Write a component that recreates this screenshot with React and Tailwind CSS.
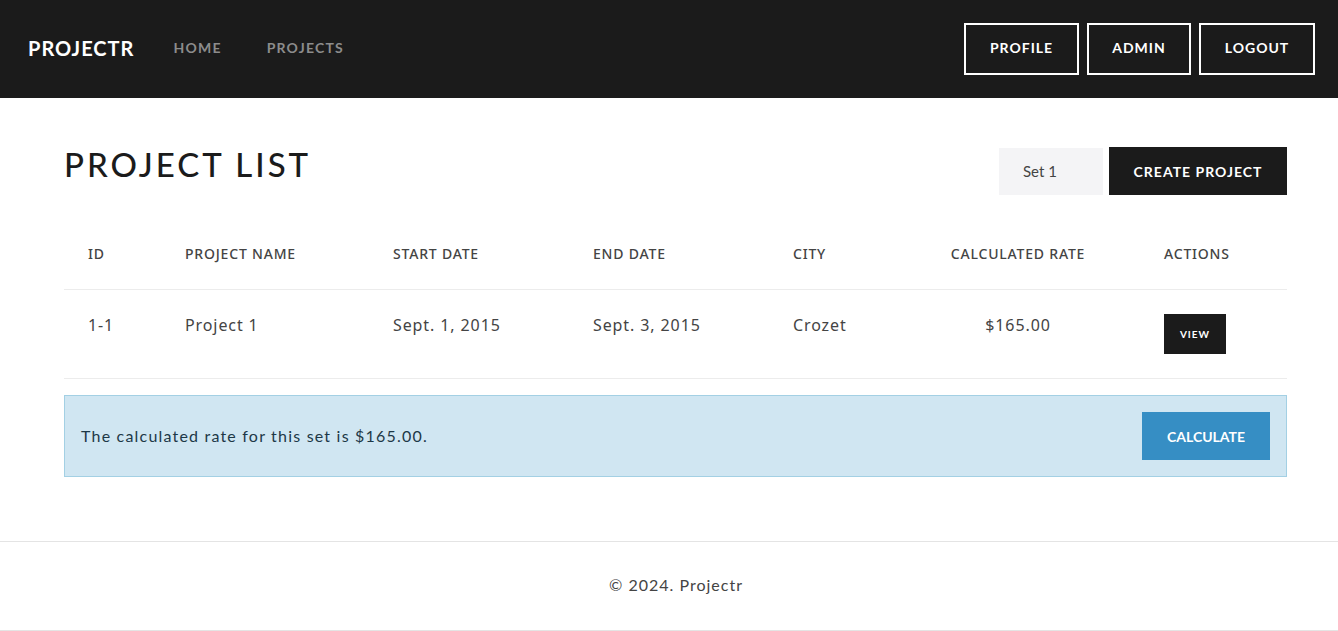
import React from "react";

const rows = [
  { id: "1-1", name: "Project 1", start: "Sept. 1, 2015", end: "Sept. 3, 2015", city: "Crozet", rate: "$165.00" },
];

const cols = "grid grid-cols-[97px_208px_200px_200px_153px_218px_147px]";

export default function App() {
  return (
    <div className="min-h-screen bg-white font-['Lato','Liberation_Sans',sans-serif] text-[#1b1b1b]">
      <nav className="flex h-[98px] items-center justify-between bg-[#1b1b1b] pl-7 pr-[23px]">
        <div className="flex items-center pb-[3px]">
          <span className="text-[20px] font-bold tracking-[1px] text-white">PROJECTR</span>
          <a className="ml-[39px] text-[14px] font-bold tracking-[1.2px] text-[#8c8c8c]">HOME</a>
          <a className="ml-[45px] text-[14px] font-bold tracking-[1.2px] text-[#8c8c8c]">PROJECTS</a>
        </div>
        <div className="flex items-center gap-2">
          <button className="h-[52px] w-[115px] border-2 border-white pb-[3px] text-[14px] font-bold tracking-[1px] text-white">PROFILE</button>
          <button className="h-[52px] w-[104px] border-2 border-white pb-[3px] text-[14px] font-bold tracking-[1px] text-white">ADMIN</button>
          <button className="h-[52px] w-[116px] border-2 border-white pb-[3px] text-[14px] font-bold tracking-[1px] text-white">LOGOUT</button>
        </div>
      </nav>

      <main className="pl-16 pr-[51px] pt-12">
        <div className="flex h-[50px] items-center justify-between">
          <h1 className="pb-[12px] text-[33px] font-medium tracking-[3px]">PROJECT LIST</h1>
          <div className="flex items-center gap-[6px]">
            <div className="flex h-[47px] w-[104px] items-center bg-[#f4f4f6] pl-6 text-[15px] text-[#444]">Set 1</div>
            <button className="h-[48px] w-[178px] bg-[#1b1b1b] text-[14px] font-bold tracking-[1px] text-white">CREATE PROJECT</button>
          </div>
        </div>

        <div className="mt-[26px] font-['Noto_Sans','Open_Sans',sans-serif] text-[#444]">
          <div className={`${cols} h-[68px] items-center border-b border-[#ececec] pb-1 text-[14px] font-medium tracking-[0.8px]`}>
            <div className="px-6">ID</div>
            <div className="px-6">PROJECT NAME</div>
            <div className="px-6">START DATE</div>
            <div className="px-6">END DATE</div>
            <div className="px-6">CITY</div>
            <div className="pl-6 pr-[50px] text-center">CALCULATED RATE</div>
            <div className="px-6">ACTIONS</div>
          </div>
          {rows.map((r) => (
            <div key={r.id} className={`${cols} h-[89px] items-center border-b border-[#ececec] text-[16px] tracking-[0.9px]`}>
              <div className="px-6 pb-[18px]">{r.id}</div>
              <div className="px-6 pb-[18px]">{r.name}</div>
              <div className="px-6 pb-[18px]">{r.start}</div>
              <div className="px-6 pb-[18px]">{r.end}</div>
              <div className="px-6 pb-[18px]">{r.city}</div>
              <div className="pl-6 pr-[50px] pb-[18px] text-center">{r.rate}</div>
              <div className="px-6">
                <button className="h-10 w-[62px] bg-[#1b1b1b] font-['Lato',sans-serif] text-[10px] font-bold tracking-[1px] text-white">VIEW</button>
              </div>
            </div>
          ))}
        </div>

        <div className="mt-4 flex h-[82px] items-center justify-between border border-[#a3d0e4] bg-[#d0e6f2] pl-4 pr-4">
          <p className="text-[16px] tracking-[1.2px] text-[#1d3847]">The calculated rate for this set is $165.00.</p>
          <button className="h-12 w-32 bg-[#368ec4] text-[14px] font-bold text-white">CALCULATE</button>
        </div>
      </main>

      <footer className="mt-16 flex h-[90px] items-center justify-center border-y border-[#e4e4e4] pb-[3px] pl-[14px] text-[16px] tracking-[1px] text-[#444]">
        © 2024. Projectr
      </footer>
    </div>
  );
}
